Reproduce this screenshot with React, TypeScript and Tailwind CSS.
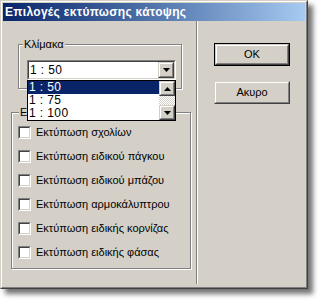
import React from "react";

const font = { fontFamily: '"Liberation Sans", Arial, sans-serif' };

function Tri({ up }: { up?: boolean }) {
  return (
    <svg width="7" height="4" viewBox="0 0 7 4" className="block">
      {up ? (
        <polygon points="3.5,0 7,4 0,4" fill="#000" />
      ) : (
        <polygon points="0,0 7,0 3.5,4" fill="#000" />
      )}
    </svg>
  );
}

function RaisedBox({ className, children }: { className?: string; children?: React.ReactNode }) {
  return (
    <div className={`border border-t-[#d4d0c8] border-l-[#d4d0c8] border-b-[#404040] border-r-[#404040] bg-[#d4d0c8] ${className ?? ""}`}>
      <div className="w-full h-full border border-t-white border-l-white border-b-[#808080] border-r-[#808080] flex items-center justify-center">
        {children}
      </div>
    </div>
  );
}

function Checkbox({ label }: { label: string }) {
  return (
    <div className="flex items-center h-[13px]">
      <div className="w-[13px] h-[13px] border border-t-[#808080] border-l-[#808080] border-b-white border-r-white">
        <div className="w-full h-full border border-t-[#404040] border-l-[#404040] border-b-[#d4d0c8] border-r-[#d4d0c8] bg-white" />
      </div>
      <span className="ml-[5px] text-[11px] text-black leading-none">{label}</span>
    </div>
  );
}

function Button({ label, def }: { label: string; def?: boolean }) {
  return (
    <div className={`w-[76px] h-[23px] ${def ? "border border-black" : ""}`}>
      <RaisedBox className="w-full h-full">
        <span className="text-[11px] text-black">{label}</span>
      </RaisedBox>
    </div>
  );
}

export default function App() {
  const items = ["1 : 50", "1 : 75", "1 : 100"];
  return (
    <div className="w-[320px] h-[300px] bg-white" style={font}>
      <div className="w-[308px] h-[289px] border border-t-[#d4d0c8] border-l-[#d4d0c8] border-b-[#404040] border-r-[#404040] shadow-[5px_5px_5px_rgba(0,0,0,0.55)]">
        <div className="w-full h-full border border-t-white border-l-white border-b-[#808080] border-r-[#808080] bg-[#d4d0c8] p-px flex flex-col">
          <div className="h-[18px] bg-gradient-to-r from-[#0a246a] to-[#a6caf0] flex items-center pl-[2px]">
            <span className="text-white font-bold text-[12px] tracking-[0.3px] leading-none">Επιλογές εκτύπωσης κάτοψης</span>
          </div>
          <div className="flex flex-1">
            <div className="w-[194px] mb-[2px] border-r border-r-[#808080] shadow-[1px_0_0_#fff] flex flex-col">
              {/* Scale group */}
              <div className="relative ml-[15px] mt-[23px] w-[164px] h-[45px] border border-[#808080] shadow-[inset_1px_1px_0_#fff,1px_1px_0_#fff]">
                <span className="absolute left-[4px] top-[-8px] bg-[#d4d0c8] px-px text-[11px] leading-[14px] text-black">Κλίμακα</span>
                <div className="relative ml-[8px] mt-[15px] w-[149px] h-[20px] z-10">
                  <div className="w-full h-full border border-t-[#808080] border-l-[#808080] border-b-white border-r-white">
                    <div className="w-full h-full border border-t-[#404040] border-l-[#404040] border-b-[#d4d0c8] border-r-[#d4d0c8] bg-white flex">
                      <span className="flex-1 pl-[1px] text-[12px] tracking-[0.4px] leading-[16px] text-black">1 : 50</span>
                      <RaisedBox className="w-[16px] h-[16px]">
                        <Tri />
                      </RaisedBox>
                    </div>
                  </div>
                  <div className="absolute left-0 top-[20px] w-[149px] h-[41px] border border-black bg-white flex">
                    <div className="flex-1 flex flex-col">
                      {items.map((it, i) => (
                        <div
                          key={it}
                          className={`h-[13px] pl-[1px] text-[12px] tracking-[0.4px] leading-[13px] ${i === 0 ? "bg-[#0a246a] text-white" : "text-black"}`}
                        >
                          {it}
                        </div>
                      ))}
                    </div>
                    <div className="w-[16px] flex flex-col">
                      <RaisedBox className="w-[16px] h-[15px]">
                        <Tri up />
                      </RaisedBox>
                      <div className="flex-1 bg-[repeating-conic-gradient(#d4d0c8_0_25%,#ffffff_0_50%)] bg-[length:2px_2px]" />
                      <RaisedBox className="w-[16px] h-[15px]">
                        <Tri />
                      </RaisedBox>
                    </div>
                  </div>
                </div>
              </div>
              {/* Print options group */}
              <div className="relative ml-[8px] mt-[23px] w-[180px] h-[157px] border border-[#808080] shadow-[inset_1px_1px_0_#fff,1px_1px_0_#fff] flex flex-col pl-[6px] pt-[13px] gap-[11px]">
                <span className="absolute left-[7px] top-[-8px] bg-[#d4d0c8] px-px text-[11px] leading-[14px] text-black">Ε</span>
                <Checkbox label="Εκτύπωση σχολίων" />
                <Checkbox label="Εκτύπωση ειδικού πάγκου" />
                <Checkbox label="Εκτύπωση ειδικού μπάζου" />
                <Checkbox label="Εκτύπωση αρμοκάλυπτρου" />
                <Checkbox label="Εκτύπωση ειδικής κορνίζας" />
                <Checkbox label="Εκτύπωση ειδικής φάσας" />
              </div>
            </div>
            <div className="flex flex-col ml-[17px] mt-[22px] gap-[15px]">
              <Button label="OK" def />
              <Button label="Ακυρο" />
            </div>
          </div>
        </div>
      </div>
    </div>
  );
}
